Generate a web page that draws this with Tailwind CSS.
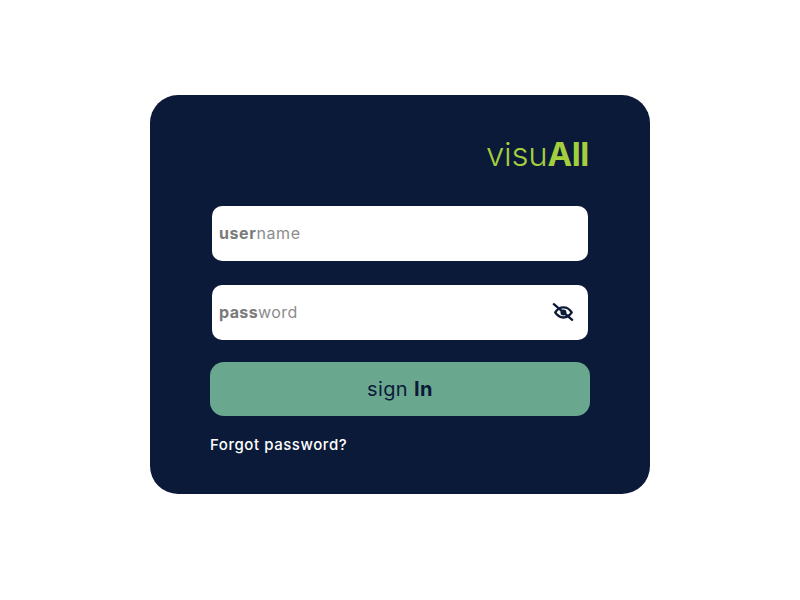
<!DOCTYPE html>
<html lang="en">
<head>
  <meta charset="UTF-8">
  <title>visuAll - sign in</title>
  <script src="https://cdn.jsdelivr.net/npm/@tailwindcss/browser@4"></script>
</head>
<body class="bg-white h-[600px] pt-[95px] font-['Inter','Noto_Sans',sans-serif] flex justify-center items-start overflow-hidden">

  <form class="w-[500px] h-[399px] bg-[#0b1a38] rounded-[28px] px-[60px] pt-[39px] flex flex-col">
    <div class="h-[40px] pr-[1px] flex items-center justify-end text-[33px] leading-none text-[#a3cf3e] tracking-[-0.3px]">
      <span class="font-light">visu</span><span class="font-bold">All</span>
    </div>

    <div class="mt-[32px] mx-[2px] h-[55px] pb-[2px] bg-white rounded-[10px] flex items-center px-[7px] text-[16px] tracking-[0.6px] text-[#8c8c8c]">
      <span class="font-bold text-[#7a7a7a]">user</span><span>name</span>
    </div>

    <div class="mt-[24px] mx-[2px] h-[55px] pb-[2px] bg-white rounded-[10px] flex items-center justify-between pl-[7px] pr-[14px] text-[16px] tracking-[0.4px] text-[#8c8c8c]">
      <div><span class="font-bold text-[#7a7a7a]">pass</span><span>word</span></div>
      <svg class="w-[22px] h-[22px] text-[#0b1a38]" viewBox="0 0 24 24" fill="none" stroke="currentColor" stroke-width="2.6" stroke-linecap="round" stroke-linejoin="round">
        <path d="M3.5 12.5s3.5-5.5 9-5.5 9 5.5 9 5.5-3.5 5.5-9 5.5-9-5.5-9-5.5z"/>
        <circle cx="12.5" cy="12.5" r="2" fill="currentColor"/>
        <path d="M2 3.5l20 17"/>
      </svg>
    </div>

    <button type="button" class="mt-[22px] h-[54px] bg-[#69a78f] rounded-[14px] text-[20px] tracking-[0.4px] text-[#0b1a38]">
      sign <span class="font-bold">In</span>
    </button>

    <a class="mt-[18px] text-[15px] leading-[22px] tracking-[0.55px] font-medium text-white">Forgot password?</a>
  </form>

</body>
</html>
